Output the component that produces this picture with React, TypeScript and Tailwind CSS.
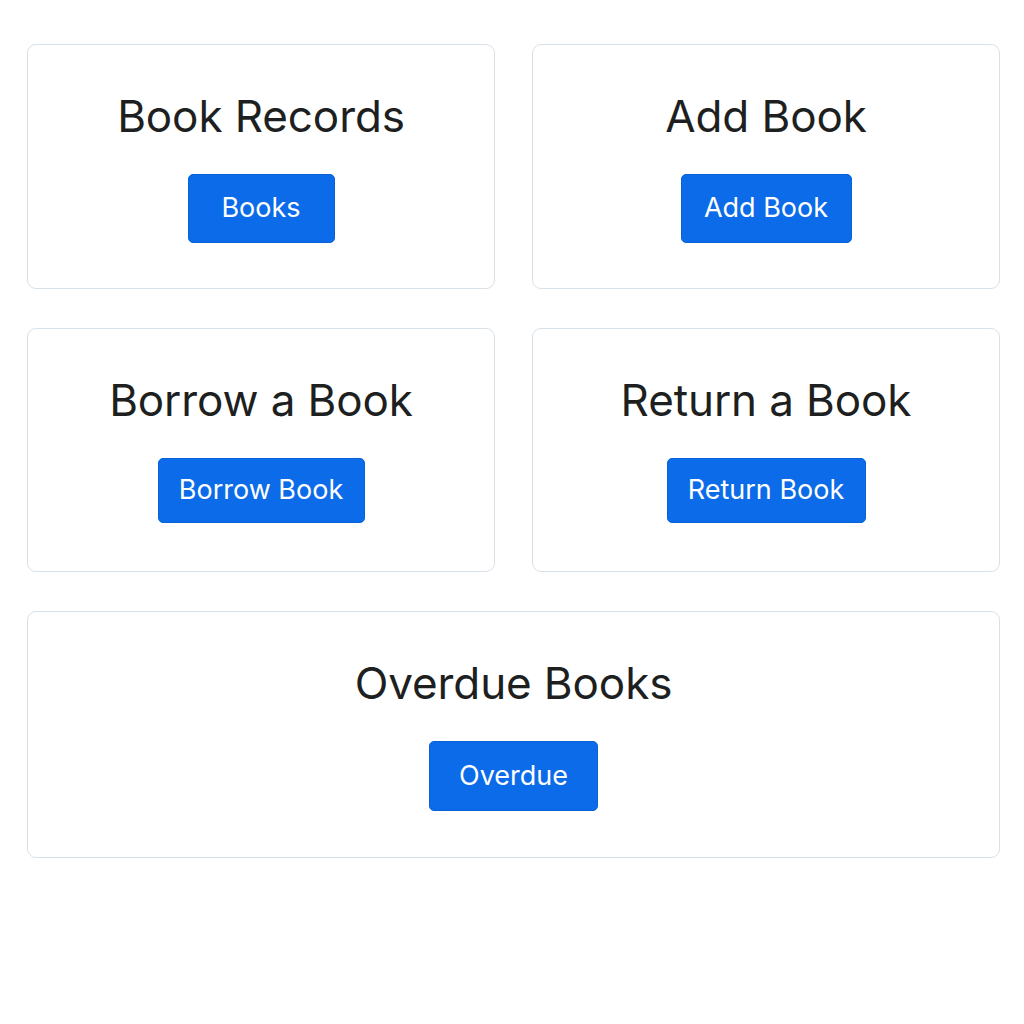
import React from 'react';

interface CardItem {
  title: string;
  label: string;
  btnClass: string;
  cardClass: string;
}

const items: CardItem[] = [
  { title: 'Book Records', label: 'Books', btnClass: 'w-[147px] h-[69px]', cardClass: 'h-[245px]' },
  { title: 'Add Book', label: 'Add Book', btnClass: 'w-[171px] h-[69px]', cardClass: 'h-[245px]' },
  { title: 'Borrow a Book', label: 'Borrow Book', btnClass: 'w-[207px] h-[65px]', cardClass: 'h-[244px]' },
  { title: 'Return a Book', label: 'Return Book', btnClass: 'w-[199px] h-[65px]', cardClass: 'h-[244px]' },
];

const ActionCard: React.FC<{ item: CardItem; wide?: boolean }> = ({ item, wide }) => (
  <div
    className={`bg-white border border-[#d9e1e8] rounded-[9px] flex flex-col items-center pt-[46px] ${item.cardClass} ${
      wide ? 'col-span-2' : ''
    }`}
  >
    <h2 className="text-[44px] leading-[50px] text-[#1d1f21] font-normal mb-[33px] tracking-[-0.1px]">
      {item.title}
    </h2>
    <button
      className={`bg-[#0b6be9] text-white text-[27px] rounded-[5px] border border-[#0a62d6] flex items-center justify-center ${item.btnClass}`}
    >
      {item.label}
    </button>
  </div>
);

export default function App() {
  return (
    <div
      className="w-[1024px] h-[1024px] bg-white pt-[44px] pl-[27px]"
      style={{ fontFamily: 'Inter, "Liberation Sans", sans-serif' }}
    >
      <div className="grid grid-cols-2 w-[973px] gap-x-[37px] gap-y-[39px]">
        {items.map((item) => (
          <ActionCard key={item.title} item={item} />
        ))}
        <ActionCard
          wide
          item={{ title: 'Overdue Books', label: 'Overdue', btnClass: 'w-[169px] h-[70px]', cardClass: 'h-[247px]' }}
        />
      </div>
    </div>
  );
}
